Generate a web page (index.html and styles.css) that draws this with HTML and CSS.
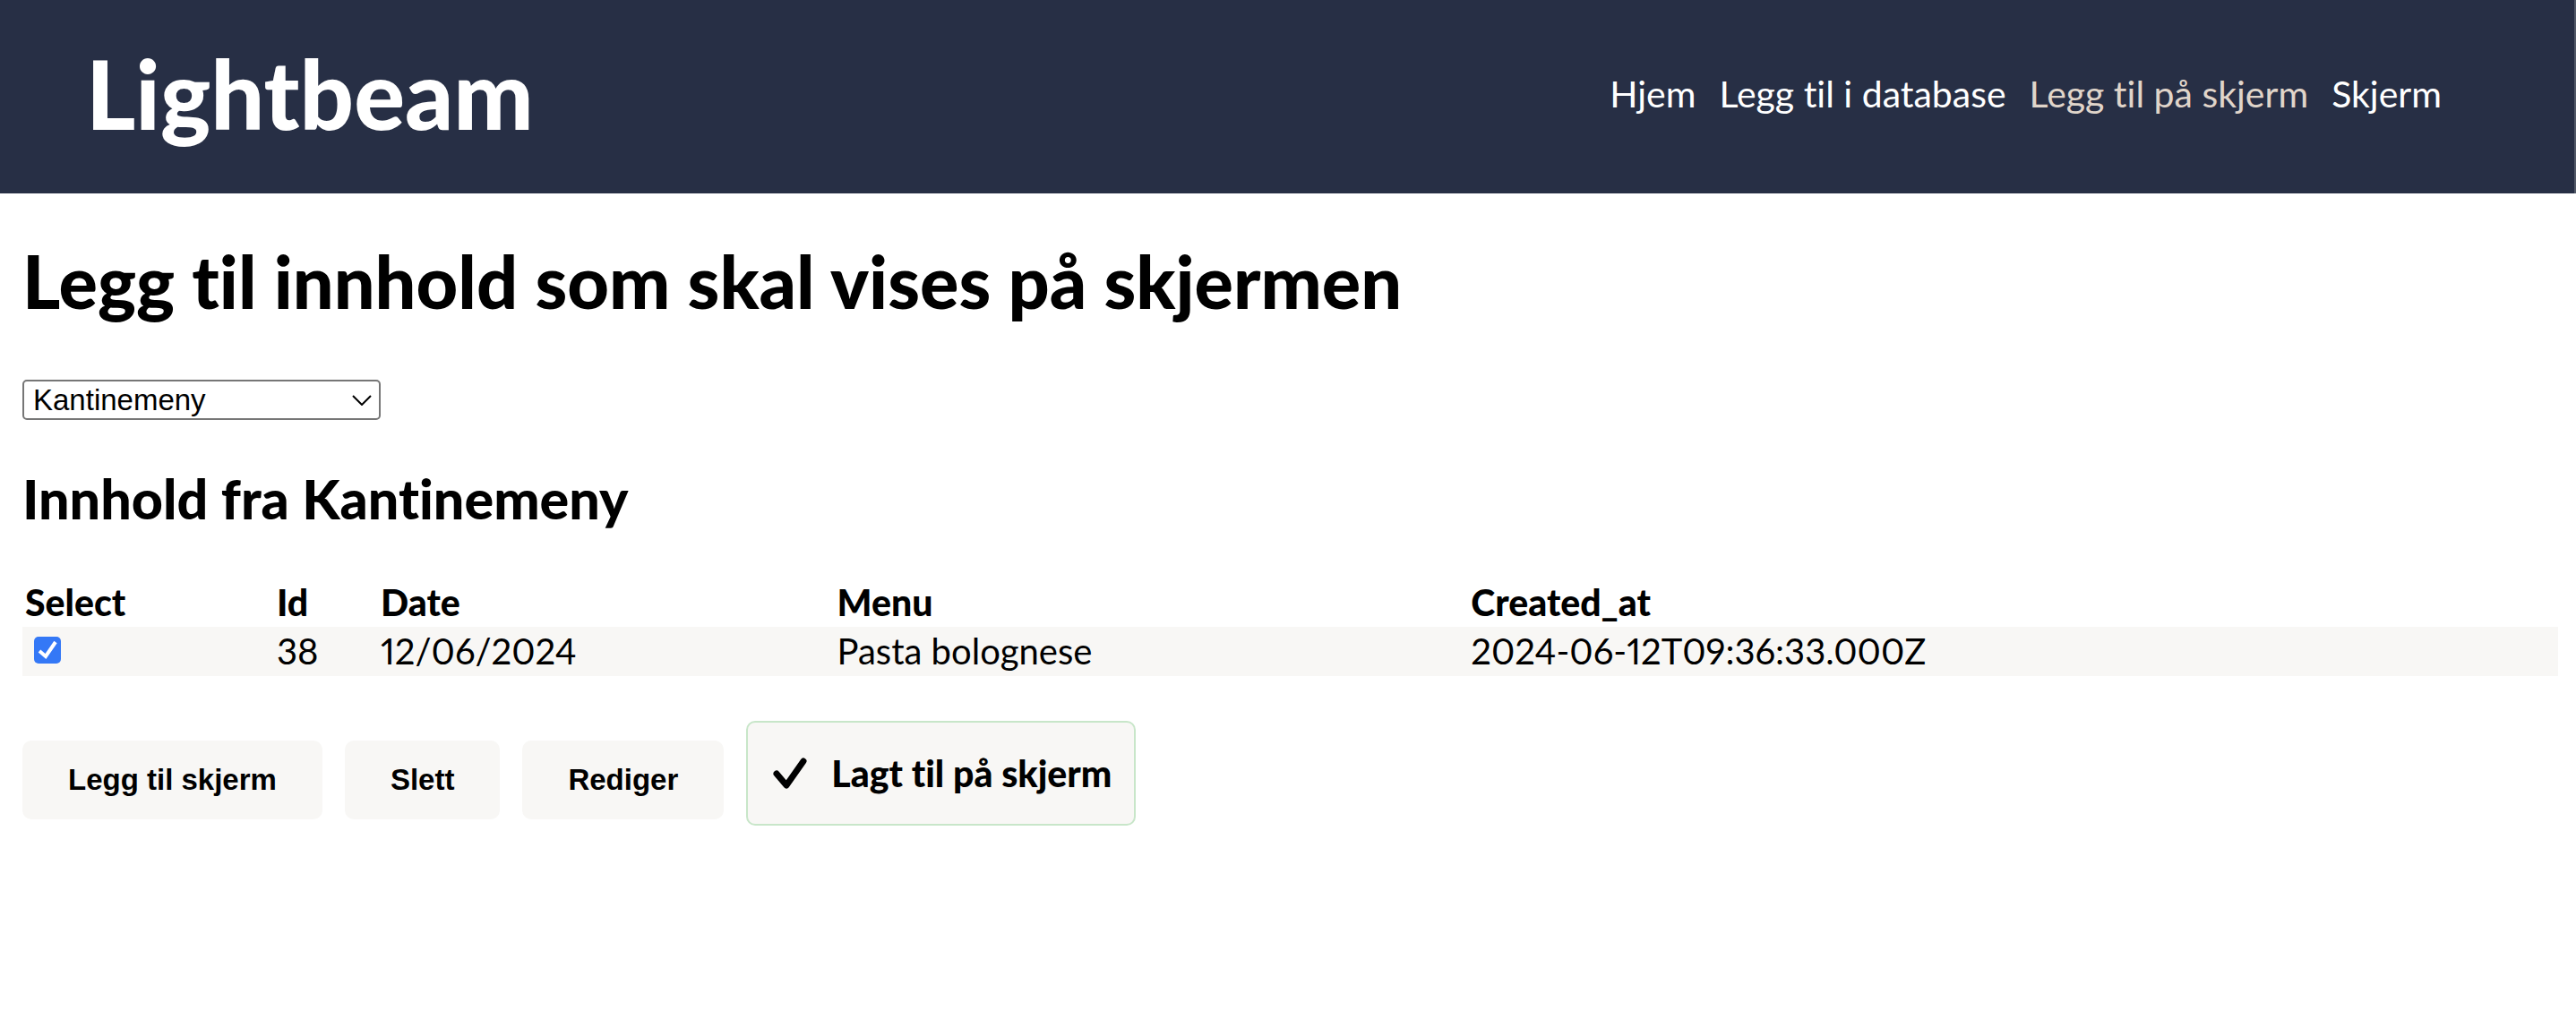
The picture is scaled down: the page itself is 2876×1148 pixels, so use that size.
FILE: index.html
```html
<!DOCTYPE html>
<html lang="no">
<head>
<meta charset="utf-8">
<title>Lightbeam</title>
<link rel="stylesheet" href="styles.css">
</head>
<body>
<header class="site-header">
  <div class="logo">Lightbeam</div>
  <nav class="site-nav">
    <a href="#">Hjem</a>
    <a href="#">Legg til i database</a>
    <a href="#" class="active" aria-current="page">Legg til på skjerm</a>
    <a href="#">Skjerm</a>
  </nav>
</header>
<main class="content">
  <h1 class="page-title">Legg til innhold som skal vises på skjermen</h1>
  <select class="source-select" aria-label="Velg innhold">
    <option>Kantinemeny</option>
  </select>
  <h2 class="section-title">Innhold fra Kantinemeny</h2>
  <table class="data-table">
    <colgroup>
      <col class="col-select"><col class="col-id"><col class="col-date"><col class="col-menu"><col>
    </colgroup>
    <thead>
      <tr><th>Select</th><th>Id</th><th>Date</th><th>Menu</th><th>Created_at</th></tr>
    </thead>
    <tbody>
      <tr>
        <td><input type="checkbox" class="row-check" aria-label="Velg rad 38" checked></td>
        <td>38</td><td>12/06/2024</td><td>Pasta bolognese</td><td>2024-06-12T09:36:33.000Z</td>
      </tr>
    </tbody>
  </table>
  <div class="actions">
    <button type="button" class="btn">Legg til skjerm</button>
    <button type="button" class="btn">Slett</button>
    <button type="button" class="btn">Rediger</button>
    <div class="status" role="status">
      <svg class="status-icon" viewBox="0 0 38 36" aria-hidden="true"><path d="M4 18 L15 31 L34 4" fill="none" stroke="#000" stroke-width="7" stroke-linecap="round" stroke-linejoin="round"/></svg>
      <span>Lagt til på skjerm</span>
    </div>
  </div>
</main>
</body>
</html>
```
FILE: styles.css
```css
* { box-sizing: border-box; }

body {
  margin: 0;
  background: #fff;
  color: #000;
  font-family: Lato, sans-serif;
  font-size: 40px;
  font-variant-ligatures: none;
  font-variant-numeric: proportional-nums;
  line-height: 51px;
}

.site-header {
  display: flex;
  align-items: center;
  justify-content: space-between;
  height: 216px;
  padding: 0 148px 8px 96px;
  border-right: 2px solid #515867;
  background: #272f45;
  color: #fff;
}

.logo {
  font-size: 106px;
  font-weight: 900;
  line-height: 128px;
}

.site-nav {
  display: flex;
  gap: 26px;
  font-size: 41px;
}

.site-nav a {
  color: #fff;
  text-decoration: none;
}

.site-nav .active { color: #e0d5ca; }

.content { padding: 48px 20px 50px 25px; }

.page-title {
  margin: 0 0 60px;
  font-size: 81px;
  font-weight: 900;
  line-height: 100px;
}

.source-select {
  display: block;
  width: 400px;
  height: 45px;
  padding: 0 0 0 10px;
  border: 2px solid #767676;
  border-radius: 5px;
  appearance: none;
  background: #fff url("data:image/svg+xml,%3Csvg xmlns='http://www.w3.org/2000/svg' width='22' height='12' viewBox='0 0 22 12'%3E%3Cpath d='M1 1L11 11L21 1' fill='none' stroke='%23000' stroke-width='2'/%3E%3C/svg%3E") no-repeat right 8px center;
  color: #000;
  font-family: "Liberation Sans", Arial, sans-serif;
  font-size: 33px;
}

.section-title {
  margin: 50px 0;
  font-size: 61px;
  font-weight: 900;
  line-height: 76px;
}

.data-table {
  width: 100%;
  table-layout: fixed;
  border-collapse: collapse;
}

.col-select { width: 281px; }
.col-id { width: 116px; }
.col-date { width: 18%; }
.col-menu { width: 25%; }

.data-table th,
.data-table td {
  padding: 2px 3px;
  text-align: left;
}

.data-table th {
  font-size: 41px;
  font-weight: 900;
}

.data-table tbody tr { background: #f8f7f5; }

.row-check {
  display: block;
  width: 30px;
  height: 30px;
  margin: 0 0 4px 10px;
  appearance: none;
  border-radius: 5px;
  background: #3478f6 url("data:image/svg+xml,%3Csvg xmlns='http://www.w3.org/2000/svg' viewBox='0 0 30 30'%3E%3Cpath d='M6 16L13 22L24 6' fill='none' stroke='%23fff' stroke-width='4'/%3E%3C/svg%3E");
}

.actions {
  display: flex;
  align-items: flex-end;
  gap: 25px;
  margin-top: 50px;
}

.btn {
  height: 88px;
  margin-bottom: 7px;
  padding: 0 51px;
  border: 0;
  border-radius: 10px;
  background: #f8f7f5;
  color: #000;
  font-family: "Liberation Sans", Arial, sans-serif;
  font-size: 33px;
  font-weight: 700;
}

.status {
  display: flex;
  align-items: center;
  gap: 27px;
  height: 117px;
  padding: 0 25px 0 28px;
  border: 2px solid #c8e6c9;
  border-radius: 10px;
  background: #f8f7f5;
  font-size: 41px;
  font-weight: 900;
}

.status-icon {
  width: 38px;
  height: 36px;
}
```
